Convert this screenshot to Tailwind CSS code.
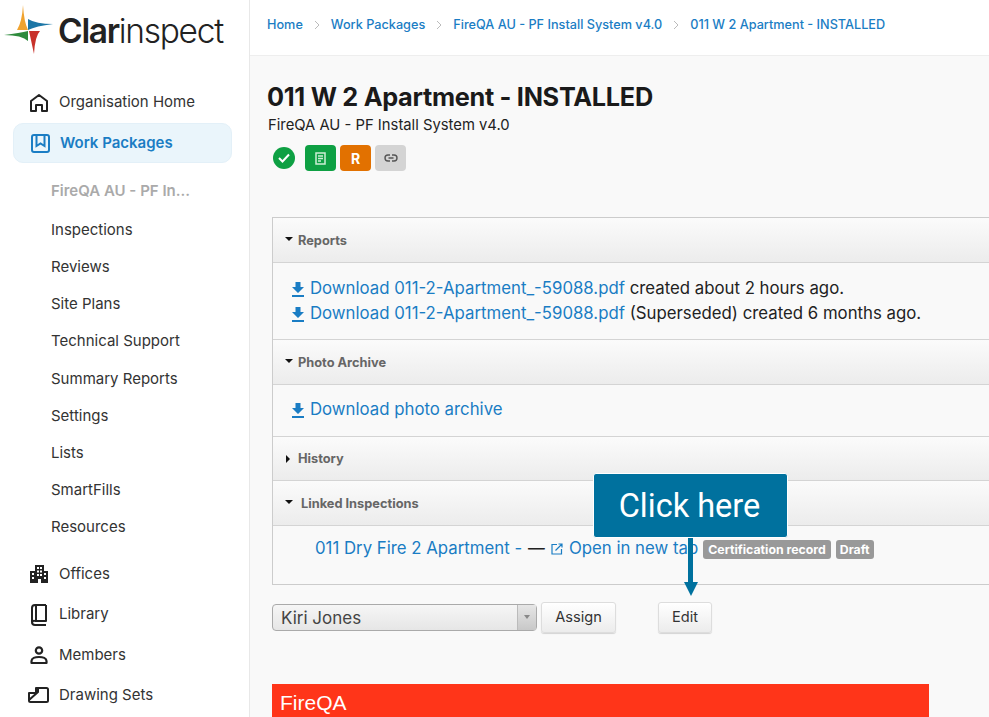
<!DOCTYPE html>
<html lang="en">
<head>
    <meta charset="UTF-8">
    <title>011 W 2 Apartment - INSTALLED</title>
    <script src="https://cdn.jsdelivr.net/npm/@tailwindcss/browser@4"></script>
</head>
<body class="h-[717px] w-[989px] overflow-hidden bg-[#f9f9f9] font-['Inter',sans-serif] text-[#222]">
<div class="flex h-[717px] relative">
    <!-- sidebar -->
    <aside class="w-[250px] shrink-0 bg-white border-r border-[#e8e8e8] h-full">
        <div class="flex items-start h-[56px]">
            <svg width="56" height="56" viewBox="0 0 56 56" class="shrink-0">
                <path d="M23 5Q24 22 28 30L17 30Q22 22 23 5z" fill="#f0a32f"/>
                <path d="M28 19Q36 24 53 24Q36 26 28 30z" fill="#1c76a6"/>
                <path d="M29 31L40 31Q35 36 34 54Q31 40 29 31z" fill="#c8322b"/>
                <path d="M4 35Q20 33 28 31L28 41Q22 35 4 35z" fill="#2e8b3d"/>
            </svg>
            <div class="text-[33.5px] leading-none tracking-[-1.3px] text-[#222] ml-[2px] mt-[15px]"><span class="font-semibold">Clar</span><span class="font-light">inspect</span></div>
        </div>
        <nav class="mt-[26px] ml-[13px] w-[219px]">
            <a class="flex items-center h-[41px] pl-[16px] gap-[10px] text-[15px] text-[#333]">
                <svg width="20" height="20" viewBox="0 0 20 20" fill="none" stroke="#222" stroke-width="2" stroke-linejoin="round"><path d="M2 18V8l8-6 8 6v10h-5v-6H7v6z"/></svg>
                Organisation Home
            </a>
            <a class="flex items-center h-[40px] pl-[17px] gap-[10px] text-[15px] font-semibold text-[#1a7dc4] bg-[#eaf5fb] rounded-[10px] border border-[#e3f0f8]">
                <svg width="19" height="19" viewBox="0 0 19 19" fill="none" stroke="#1a7dc4" stroke-width="2"><rect x="1" y="1" width="17" height="17" rx="2"/><path d="M5.500 2v10l4-2.500 4 2.500V2"/></svg>
                Work Packages
            </a>
            <div class="mt-[8px] flex flex-col text-[15px] text-[#333] pl-[38px]">
                <div class="h-[41px] flex items-center font-semibold text-[#aaa]">FireQA AU - PF In...</div>
                <a class="h-[37px] flex items-center">Inspections</a>
                <a class="h-[37px] flex items-center">Reviews</a>
                <a class="h-[37px] flex items-center">Site Plans</a>
                <a class="h-[37px] flex items-center">Technical Support</a>
                <a class="h-[38px] flex items-center">Summary Reports</a>
                <a class="h-[37px] flex items-center">Settings</a>
                <a class="h-[37px] flex items-center">Lists</a>
                <a class="h-[37px] flex items-center">SmartFills</a>
                <a class="h-[37px] flex items-center">Resources</a>
            </div>
            <div class="mt-[8px] flex flex-col text-[15px] text-[#333]">
                <a class="h-[40px] flex items-center pl-[16px] gap-[10px]">
                    <svg width="20" height="20" viewBox="0 0 20 20" fill="#222"><path fill-rule="evenodd" d="M6 1h9v6h4v12h-7v-4H9v4H1V7h5zM8 3v2h2V3zm3 0v2h2V3zM8 6.500v2h2v-2zm3 0v2h2v-2zM3 9v2h2V9zm0 4v2h2v-2zm5-3v2h2v-2zm3 0v2h2v-2zm4-1v2h2V9zm0 4v2h2v-2z"/></svg>
                    Offices
                </a>
                <a class="h-[41px] flex items-center pl-[16px] gap-[10px]">
                    <svg width="20" height="22" viewBox="0 0 20 22" fill="none" stroke="#222" stroke-width="2" stroke-linejoin="round"><path d="M17 1H6a3 3 0 0 0-3 3v14a3 3 0 0 0 3 3h11M17 1v16H6a2 2 0 0 0-3 2M7 1v16"/></svg>
                    Library
                </a>
                <a class="h-[40px] flex items-center pl-[16px] gap-[10px]">
                    <svg width="20" height="20" viewBox="0 0 20 20" fill="none" stroke="#222" stroke-width="2.200"><circle cx="10" cy="5.500" r="3.200"/><path d="M2.500 18v-2c0-2.500 3.500-4 7.500-4s7.500 1.500 7.500 4v2z" stroke-linejoin="round"/></svg>
                    Members
                </a>
                <a class="h-[40px] flex items-center pl-[15px] gap-[10px]">
                    <svg width="21" height="18" viewBox="0 0 21 18" fill="none" stroke="#222" stroke-width="2" stroke-linejoin="round"><path d="M8 2h10.500a1.500 1.500 0 0 1 1.500 1.500v11a1.500 1.500 0 0 1-1.500 1.500h-16A1.500 1.500 0 0 1 1 14.500V7h7zM1 14 10 6V2"/></svg>
                    Drawing Sets
                </a>
            </div>
        </nav>
    </aside>

    <!-- main column -->
    <main class="flex-1 min-w-0">
        <div class="h-[56px] bg-white border-b border-[#eeeeee] flex items-center pl-[17px] pb-[5px] text-[12.7px] font-medium text-[#1a7dc4]">
            <a>Home</a>
            <svg width="28" height="10" viewBox="0 0 28 10" fill="none" stroke="#bbb" stroke-width="1"><path d="M12 1l4 4-4 4"/></svg>
            <a>Work Packages</a>
            <svg width="28" height="10" viewBox="0 0 28 10" fill="none" stroke="#bbb" stroke-width="1"><path d="M12 1l4 4-4 4"/></svg>
            <a>FireQA AU - PF Install System v4.0</a>
            <svg width="28" height="10" viewBox="0 0 28 10" fill="none" stroke="#bbb" stroke-width="1"><path d="M12 1l4 4-4 4"/></svg>
            <a>011 W 2 Apartment - INSTALLED</a>
        </div>

        <div class="pl-[18px]">
            <h1 class="mt-[25px] ml-[-1px] text-[25.3px] leading-[32px] font-bold tracking-[-0.3px] text-[#1a1a1a]">011 W 2 Apartment - INSTALLED</h1>
            <div class="text-[14.8px] leading-[24px] text-[#222]">FireQA AU - PF Install System v4.0</div>
            <div class="flex items-center mt-[8px] pl-[5px] h-[26px]">
                <div class="w-[22px] h-[22px] rounded-full bg-[#0ea043] flex items-center justify-center">
                    <svg width="12" height="10" viewBox="0 0 12 10" fill="none" stroke="white" stroke-width="2"><path d="M1 5l3.500 3.500L11 1.500"/></svg>
                </div>
                <div class="ml-[10px] w-[31px] h-[26px] rounded-[4px] bg-[#0ea043] flex items-center justify-center">
                    <svg width="11" height="13" viewBox="0 0 11 13" fill="none" stroke="#cdeed5" stroke-width="1.500"><rect x="1" y="1" width="9" height="11"/><path d="M3 4h5M3 6.500h5M3 9h3"/></svg>
                </div>
                <div class="ml-[4px] w-[31px] h-[26px] rounded-[4px] bg-[#e27100] flex items-center justify-center text-white font-bold text-[14px]">R</div>
                <div class="ml-[4px] w-[31px] h-[26px] rounded-[4px] bg-[#d4d4d4] flex items-center justify-center">
                    <svg width="14" height="8" viewBox="0 0 14 8" fill="none" stroke="#555" stroke-width="1.400"><path d="M6 1H4a3 3 0 0 0 0 6h2M8 1h2a3 3 0 0 1 0 6H8M4.500 4h5"/></svg>
                </div>
            </div>

            <!-- accordion -->
            <div class="mt-[46px] mr-[-2px] ml-[4px] border-l border-[#ccc] border-t border-b text-[#555]">
                <div class="h-[45px] flex items-center pl-[12px] pt-[2px] bg-linear-to-b from-[#fbfbfb] to-[#ececec] border-b border-[#d4d4d4] text-[12.8px] font-bold text-[#666]">
                    <span class="w-0 h-0 border-x-[4px] border-x-transparent border-t-[4px] border-t-[#111] mr-[5px] mt-[-4px]"></span>Reports
                </div>
                <div class="h-[77px] pt-[13px] pl-[18px] text-[16.8px] leading-[25px] text-[#222] border-b border-[#d4d4d4]">
                    <div class="flex items-center">
                        <svg width="14" height="16" viewBox="0 0 14 16" fill="#1a7dc4" class="mr-[5px]"><path d="M4.500 1h5v5H13L7 12 1 6h3.500zM1 14h12v2H1z"/></svg>
                        <a class="text-[#1a7dc4]">Download 011-2-Apartment_-59088.pdf</a>&nbsp;created about 2 hours ago.
                    </div>
                    <div class="flex items-center">
                        <svg width="14" height="16" viewBox="0 0 14 16" fill="#1a7dc4" class="mr-[5px]"><path d="M4.500 1h5v5H13L7 12 1 6h3.500zM1 14h12v2H1z"/></svg>
                        <a class="text-[#1a7dc4]">Download 011-2-Apartment_-59088.pdf</a>&nbsp;(Superseded) created 6 months ago.
                    </div>
                </div>
                <div class="h-[45px] flex items-center pl-[12px] pt-[2px] bg-linear-to-b from-[#fbfbfb] to-[#ececec] border-b border-[#d4d4d4] text-[12.8px] font-bold text-[#666]">
                    <span class="w-0 h-0 border-x-[4px] border-x-transparent border-t-[4px] border-t-[#111] mr-[5px] mt-[-4px]"></span>Photo Archive
                </div>
                <div class="h-[52px] pt-[12px] pl-[18px] text-[16.8px] leading-[25px] border-b border-[#d4d4d4]">
                    <div class="flex items-center">
                        <svg width="14" height="16" viewBox="0 0 14 16" fill="#1a7dc4" class="mr-[5px]"><path d="M4.500 1h5v5H13L7 12 1 6h3.500zM1 14h12v2H1z"/></svg>
                        <a class="text-[#1a7dc4]">Download photo archive</a>
                    </div>
                </div>
                <div class="h-[44px] flex items-center pl-[13px] pt-[1px] bg-linear-to-b from-[#fbfbfb] to-[#ececec] border-b border-[#d4d4d4] text-[12.8px] font-bold text-[#666]">
                    <span class="w-0 h-0 border-y-[4px] border-y-transparent border-l-[4px] border-l-[#111] mr-[8px]"></span>History
                </div>
                <div class="h-[45px] flex items-center pl-[12px] pt-[2px] bg-linear-to-b from-[#fbfbfb] to-[#ececec] border-b border-[#d4d4d4] text-[12.8px] font-bold text-[#666]">
                    <span class="w-0 h-0 border-x-[4px] border-x-transparent border-t-[4px] border-t-[#111] mr-[8px] mt-[-4px]"></span>Linked Inspections
                </div>
                <div class="h-[58px] pt-[10px] pl-[42px] flex items-start text-[16.8px] leading-[25px] text-[#222]">
                    <a class="text-[#1a7dc4]">011 Dry Fire 2 Apartment -</a>
                    <span class="ml-[6px]">—</span>
                    <svg width="12" height="12" viewBox="0 0 12 12" fill="none" stroke="#1a7dc4" stroke-width="1.200" class="ml-[6px] mt-[7px]"><path d="M6 1.500H1v9.500h9.500V6M4.500 7.500 11 1M7.500 1H11v3.500"/></svg>
                    <a class="text-[#1a7dc4] ml-[6px]">Open in new tab</a>
                    <span class="ml-[5px] mt-[4px] h-[19px] px-[5px] rounded-[3px] bg-[#999] text-white text-[12.3px] font-bold leading-[19px]">Certification record</span>
                    <span class="ml-[5px] mt-[4px] h-[19px] px-[4px] rounded-[3px] bg-[#999] text-white text-[12.3px] font-bold leading-[19px]">Draft</span>
                </div>
            </div>

            <!-- assign row -->
            <div class="flex items-center mt-[16px] ml-[4px] h-[32px]">
                <div class="w-[265px] h-[27px] rounded-[4px] border border-[#aaa] flex bg-linear-to-b from-[#f6f6f6] to-[#e6e6e6] text-[17px] text-[#444]">
                    <div class="flex-1 pl-[8px] leading-[26px]">Kiri Jones</div>
                    <div class="w-[19px] border-l border-[#bbb] flex items-center justify-center bg-linear-to-b from-[#e6e6e6] to-[#c8c8c8]">
                        <span class="w-0 h-0 border-x-[3px] border-x-transparent border-t-[4px] border-t-[#888]"></span>
                    </div>
                </div>
                <button class="ml-[4px] w-[75px] h-[31px] pt-[2px] rounded-[3px] border border-[#ddd] shadow-[0_1px_1px_rgba(0,0,0,0.15)] bg-linear-to-b from-white to-[#ececec] text-[14.6px] text-[#333]">Assign</button>
                <button class="ml-[42px] w-[54px] h-[31px] pt-[2px] rounded-[3px] border border-[#ddd] shadow-[0_1px_1px_rgba(0,0,0,0.15)] bg-linear-to-b from-white to-[#ececec] text-[14.6px] text-[#333]">Edit</button>
            </div>

            <div class="mt-[51px] ml-[4px] w-[657px] h-[40px] bg-[#ff3519] text-white text-[21px] pl-[8px] pt-[3px] font-['Liberation_Sans',sans-serif]">FireQA</div>
        </div>
    </main>

    <!-- callout over the page -->
    <div class="absolute left-[593px] top-[473px] w-[195px] h-[65px] pt-[1px] pr-[2px] bg-[#00719e] border border-white rounded-[3px] flex items-center justify-center text-white text-[32.5px] font-['Roboto',sans-serif]">Click here</div>
    <svg class="absolute left-[682px] top-[538px]" width="18" height="58" viewBox="0 0 18 58" fill="#00719e"><rect x="6" width="5" height="45"/><polygon points="2,44 16,44 9,58"/></svg>
</div>
</body>
</html>
